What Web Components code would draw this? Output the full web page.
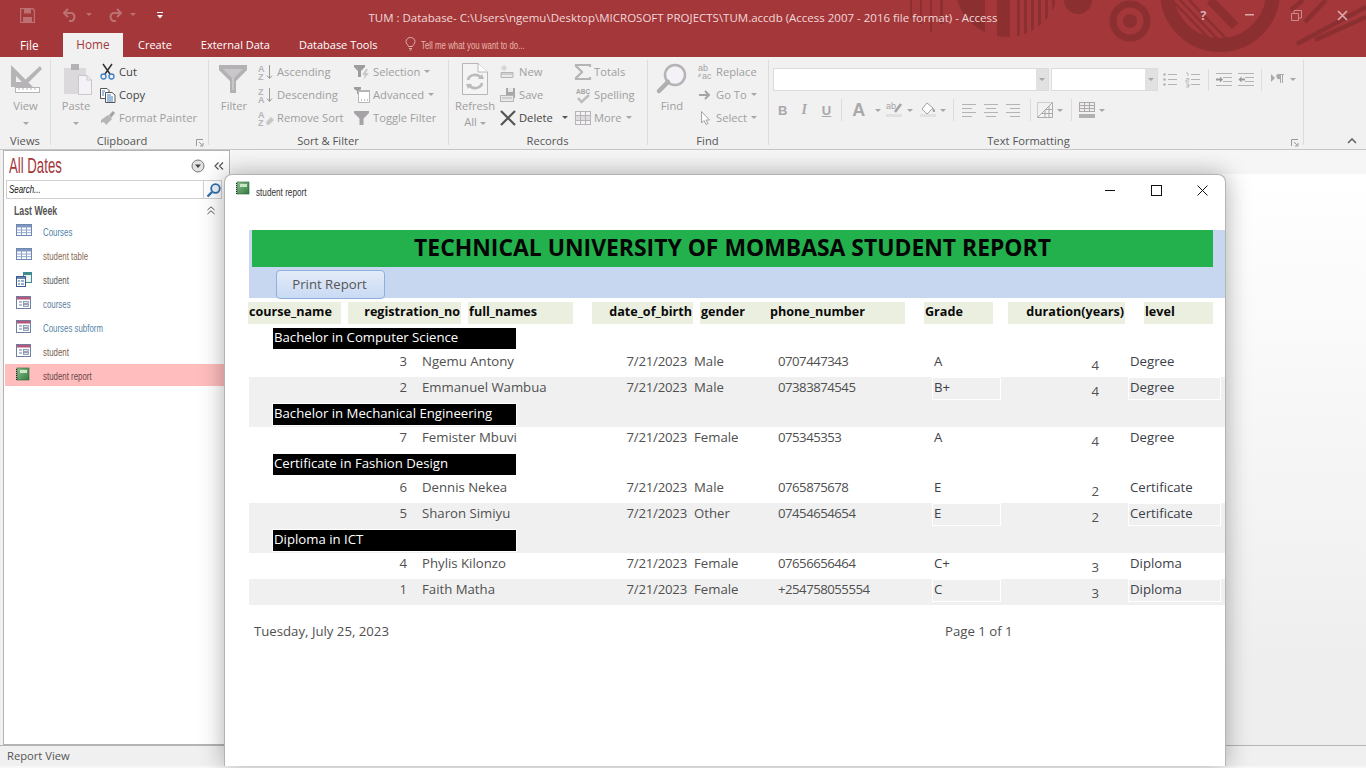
<!DOCTYPE html>
<html>
<head>
<meta charset="utf-8">
<title>TUM student report</title>
<style>
  html, body { margin: 0; padding: 0; }
  body { width: 1366px; height: 768px; overflow: hidden; background: #f8f8f8; font-family: "Open Sans", "Liberation Sans", sans-serif; font-size: 11.2px; color: #444; display: flex; flex-direction: column; position: relative; }
</style>
</head>
<body>
<ac-header>
  <ac-titlebar>TUM : Database- C:\Users\ngemu\Desktop\MICROSOFT PROJECTS\TUM.accdb (Access 2007 - 2016 file format) - Access</ac-titlebar>
  <ac-tabs></ac-tabs>
</ac-header>
<ac-ribbon>
  <ac-group label="Views" width="50">
    <ac-big icon="view" iw="30" ih="30" w="50" menu style="padding-left:1px">View</ac-big>
  </ac-group>
  <ac-group label="Clipboard" width="158" launcher pad="14">
    <ac-big icon="paste" iw="30" ih="32" w="50" menu style="padding-left:2px">Paste</ac-big>
    <ac-stack w="108">
      <ac-small icon="cut" on>Cut</ac-small>
      <ac-small icon="copy" on>Copy</ac-small>
      <ac-small icon="painter">Format Painter</ac-small>
    </ac-stack>
  </ac-group>
  <ac-group label="Sort &amp; Filter" width="240">
    <ac-big icon="filter" iw="30" ih="28" w="50" style="padding-left:2px">Filter</ac-big>
    <ac-stack w="96">
      <ac-small icon="asc">Ascending</ac-small>
      <ac-small icon="desc">Descending</ac-small>
      <ac-small icon="nosort">Remove Sort</ac-small>
    </ac-stack>
    <ac-stack w="94">
      <ac-small icon="selection" menu>Selection</ac-small>
      <ac-small icon="advanced" menu>Advanced</ac-small>
      <ac-small icon="toggle">Toggle Filter</ac-small>
    </ac-stack>
  </ac-group>
  <ac-group label="Records" width="199">
    <ac-big icon="refresh" iw="26" ih="32" w="52" second="All" style="padding-left:2px">Refresh</ac-big>
    <ac-stack w="75">
      <ac-small icon="new">New</ac-small>
      <ac-small icon="save">Save</ac-small>
      <ac-small icon="delete" on menu gap="9">Delete</ac-small>
    </ac-stack>
    <ac-stack w="72">
      <ac-small icon="totals">Totals</ac-small>
      <ac-small icon="spelling">Spelling</ac-small>
      <ac-small icon="more" menu>More</ac-small>
    </ac-stack>
  </ac-group>
  <ac-group label="Find" width="121">
    <ac-big icon="find" iw="30" ih="30" w="50">Find</ac-big>
    <ac-stack w="70">
      <ac-small icon="replace">Replace</ac-small>
      <ac-small icon="goto" menu>Go To</ac-small>
      <ac-small icon="select" menu>Select</ac-small>
    </ac-stack>
  </ac-group>
  <ac-group label="Text Formatting" width="535" launcher pad="14">
    <ac-format></ac-format>
  </ac-group>
  <ac-collapse></ac-collapse>
</ac-ribbon>
<ac-main>
  <ac-nav title-text="All Dates">
    <ac-nav-item icon="table" tone="#4f82a8">Courses</ac-nav-item>
    <ac-nav-item icon="table" tone="#8a6a52">student table</ac-nav-item>
    <ac-nav-item icon="split" tone="#5a5a5a">student</ac-nav-item>
    <ac-nav-item icon="form" tone="#5c7d9c">courses</ac-nav-item>
    <ac-nav-item icon="form" tone="#5585a5">Courses subform</ac-nav-item>
    <ac-nav-item icon="form" tone="#7a5c4c">student</ac-nav-item>
    <ac-nav-item icon="report" tone="#6a4648" selected>student report</ac-nav-item>
  </ac-nav>
</ac-main>
<ac-status>Report View</ac-status>
<ac-window caption="student report">
  <ac-report-header title-text="TECHNICAL UNIVERSITY OF MOMBASA STUDENT REPORT"></ac-report-header>
  <ac-head-row>
    <ac-head-cell x="0" w="93">course_name</ac-head-cell>
    <ac-head-cell x="7" w="113" right>registration_no</ac-head-cell>
    <ac-head-cell x="7" w="105">full_names</ac-head-cell>
    <ac-head-cell x="19" w="101" right>date_of_birth</ac-head-cell>
    <ac-head-cell x="7" w="69">gender</ac-head-cell>
    <ac-head-cell x="0" w="136">phone_number</ac-head-cell>
    <ac-head-cell x="19" w="69">Grade</ac-head-cell>
    <ac-head-cell x="15" w="117" right>duration(years)</ac-head-cell>
    <ac-head-cell x="19" w="69">level</ac-head-cell>
  </ac-head-row>
  <ac-group-head>Bachelor in Computer Science</ac-group-head>
  <ac-row reg="3" name="Ngemu Antony" dob="7/21/2023" gender="Male" phone="0707447343" grade="A" years="4" level="Degree"></ac-row>
  <ac-row alt reg="2" name="Emmanuel Wambua" dob="7/21/2023" gender="Male" phone="07383874545" grade="B+" years="4" level="Degree"></ac-row>
  <ac-group-head alt>Bachelor in Mechanical Engineering</ac-group-head>
  <ac-row reg="7" name="Femister Mbuvi" dob="7/21/2023" gender="Female" phone="075345353" grade="A" years="4" level="Degree"></ac-row>
  <ac-group-head>Certificate in Fashion Design</ac-group-head>
  <ac-row reg="6" name="Dennis Nekea" dob="7/21/2023" gender="Male" phone="0765875678" grade="E" years="2" level="Certificate"></ac-row>
  <ac-row alt reg="5" name="Sharon Simiyu" dob="7/21/2023" gender="Other" phone="07454654654" grade="E" years="2" level="Certificate"></ac-row>
  <ac-group-head alt>Diploma in ICT</ac-group-head>
  <ac-row reg="4" name="Phylis Kilonzo" dob="7/21/2023" gender="Female" phone="07656656464" grade="C+" years="3" level="Diploma"></ac-row>
  <ac-row alt reg="1" name="Faith Matha" dob="7/21/2023" gender="Female" phone="+254758055554" grade="C" years="3" level="Diploma"></ac-row>
  <ac-report-footer date="Tuesday, July 25, 2023" page="Page 1 of 1"></ac-report-footer>
</ac-window>

<script>
const G = "#b6b4b6"
const ICONS = {
  view: `<path d="M0 1V23H22ZM5 12V18H11Z" fill="${G}" fill-rule="evenodd"/><path d="M29 2L15 15L13 20L18 18L31 5Z" fill="${G}"/><rect x="4.500" y="23.500" width="24" height="5" fill="#fff" stroke="${G}"/><path d="M8 24v2M12 24v2M16 24v2M20 24v2M24 24v2" stroke="${G}"/>`,
  paste: `<g transform="translate(3 0)"><rect x="0" y="5" width="22" height="26" fill="#dcd9dc"/><rect x="7" y="1" width="8" height="6" fill="#b5b2b5"/><path d="M14.500 12.500H23L27.500 17V31.500H14.500Z" fill="#f5f2f7" stroke="#c9c6cc"/><path d="M23 12.500V17H27.500" fill="none" stroke="#c9c6cc"/></g>`,
  cut: `<path d="M3 0L10 10M12 0L5 10" stroke="#333" stroke-width="1.500" fill="none"/><circle cx="3.500" cy="12.500" r="2.500" fill="none" stroke="#3f7fc4" stroke-width="1.300"/><circle cx="11.500" cy="12.500" r="2.500" fill="none" stroke="#3f7fc4" stroke-width="1.300"/>`,
  copy: `<path d="M.5 1.500H7L9 3.500V11.500H.5Z" fill="#fff" stroke="#555"/><path d="M5.500 5.500H12L15 8V15.500H5.500Z" fill="#fff" stroke="#555"/><path d="M7 8h4M7 10h6M7 12h6M7 14h6" stroke="#3f7fc4"/><path d="M2 4h3M2 6h2M2 8h2" stroke="#3f7fc4"/>`,
  painter: `<path d="M1 10L8 5L12 9L6 15L4 12L1 13Z" fill="${G}"/><path d="M9 5L13 1L15 3L11 8Z" fill="#a5a3a5"/>`,
  filter: `<path d="M0 0H28V5L17 16V28H11V16L0 5Z" fill="#b3b1b3"/><path d="M4 4H24L15 13V25H13V13Z" fill="#c9c7c9"/>`,
  asc: `<text x="0" y="7.500" font-size="9" font-weight="700" fill="${G}" font-family="Liberation Sans">A</text><text x="0" y="15.500" font-size="9" font-weight="700" fill="${G}" font-family="Liberation Sans">Z</text><path d="M11.500 1V14M9 11.500L11.500 14.500L14 11.500" stroke="#999" fill="none"/>`,
  desc: `<text x="0" y="7.500" font-size="9" font-weight="700" fill="${G}" font-family="Liberation Sans">Z</text><text x="0" y="15.500" font-size="9" font-weight="700" fill="${G}" font-family="Liberation Sans">A</text><path d="M11.500 1V14M9 11.500L11.500 14.500L14 11.500" stroke="#999" fill="none"/>`,
  nosort: `<text x="0" y="7.500" font-size="9" font-weight="700" fill="${G}" font-family="Liberation Sans">A</text><text x="0" y="15.500" font-size="9" font-weight="700" fill="${G}" font-family="Liberation Sans">Z</text><path d="M8 12L13 7L16 10L11 15H9Z" fill="#c9c7c9"/>`,
  selection: `<path d="M0 1H11V3L7 7V13H4V7L0 3Z" fill="#9e9c9e"/><path d="M12 5L8 11H11L9 16L15 9H12L14 5Z" fill="#c9c7c9"/>`,
  advanced: `<path d="M0 0H7V2L5 4V7H3V4L0 2Z" fill="#9e9c9e"/><path d="M4.500 3.500H15.500V15.500H4.500Z" fill="#fff" stroke="${G}"/><path d="M4 3h12v2H4z" fill="${G}"/><path d="M7 13h1M10 13h1M13 13h1" stroke="#888"/>`,
  toggle: `<path d="M0 1H15V3L9.500 8.500V15H5.500V8.500L0 3Z" fill="#a5a3a5"/>`,
  refresh: `<path d="M.5 .5H16L25.500 9V31.500H.5Z" fill="#f5f4f5" stroke="#b8b6b8"/><path d="M16 .5V9H25.500" fill="#fff" stroke="#b8b6b8"/><path d="M6 17A7 6 0 0 1 19 15M20 20A7 6 0 0 1 7 22" stroke="#bbb" stroke-width="2.600" fill="none"/><path d="M16 16L22 16L20 11ZM10 21L4 21L6 26Z" fill="#bbb"/>`,
  new: `<path d="M1 8.500H13V13.500H1Z" fill="#e9e9e9" stroke="${G}"/><path d="M1 10h12" stroke="${G}"/><path d="M4 1V7M1 4H7M2 2L6 6M6 2L2 6" stroke="#d0ced0"/>`,
  save: `<rect x="6" y="1" width="9" height="10" fill="#a9a7a9"/><rect x="8" y="1" width="5" height="4" fill="#e8e8e8"/><rect x="0.500" y="8.500" width="13" height="6" fill="#e8e8e8" stroke="${G}"/><path d="M2 11h10" stroke="${G}"/>`,
  delete: `<path d="M1 1L15 15M15 1L1 15" stroke="#555" stroke-width="2.200"/>`,
  totals: `<path d="M15 3V1H1V2L7 8L1 14V15H15V13" fill="none" stroke="${G}" stroke-width="2.200"/>`,
  spelling: `<text x="1" y="6.500" font-size="6.500" font-weight="700" fill="#a5a3a5" font-family="Liberation Sans">ABC</text><path d="M3 11L6.500 15L14 8" stroke="#bbb" stroke-width="2.400" fill="none"/>`,
  more: `<rect x="0.500" y="1.500" width="15" height="13" fill="#f4f2f4" stroke="${G}"/><rect x="1" y="6" width="14" height="4" fill="#e0dce0"/><path d="M1 5.500H15M1 10.500H15M5.500 2V14M10.500 2V14" stroke="${G}"/>`,
  find: `<circle cx="18" cy="11" r="10" fill="#f5f2f7" stroke="#b5b3b5" stroke-width="2.500"/><path d="M11 18L2 27" stroke="#b0aeb0" stroke-width="4.500" stroke-linecap="round"/>`,
  replace: `<text x="1" y="7" font-size="9" fill="#a5a3a5" font-family="Liberation Sans">ab</text><text x="5" y="15" font-size="9" fill="#a5a3a5" font-family="Liberation Sans">ac</text><path d="M3 9.500V12H1" stroke="#a5a3a5" fill="none"/>`,
  goto: `<path d="M2 8H12M8 4L12 8L8 12" stroke="#a5a3a5" stroke-width="2" fill="none"/>`,
  select: `<path d="M4.500 1.500V13L7 10.500L9 14.500L11 13.500L9 10H12.500Z" fill="#fff" stroke="#a5a3a5"/>`,
  bullets: `<g stroke="#b5b3b5"><path d="M5 2.500h9M5 7.500h9M5 12.500h9"/></g><circle cx="1.500" cy="2.500" r="1.300" fill="#b5b3b5"/><circle cx="1.500" cy="7.500" r="1.300" fill="#b5b3b5"/><circle cx="1.500" cy="12.500" r="1.300" fill="#b5b3b5"/>`,
  numbers: `<path d="M6 2.500h9M6 7.500h9M6 12.500h9" stroke="#b5b3b5"/><path d="M1 1h2v3M1 6.500h3v1.500h-3v2h3M1 12h3v1.500h-2M4 13.500v1.500h-3" stroke="#b5b3b5" fill="none" stroke-width=".8"/>`,
  indent: `<path d="M0 1.500h16M7 5.500h9M7 9.500h9M0 13.500h16" stroke="#b5b3b5"/><path d="M0 7.500h4" stroke="#999" stroke-width="2"/><path d="M4 4.500L7 7.500L4 10.500Z" fill="#999"/>`,
  outdent: `<path d="M0 1.500h16M7 5.500h9M7 9.500h9M0 13.500h16" stroke="#b5b3b5"/><path d="M3 7.500h4" stroke="#999" stroke-width="2"/><path d="M3.500 4.500L.5 7.500L3.500 10.500Z" fill="#999"/>`,
  para: `<path d="M0 2L4 6L0 10Z" fill="#aaa"/><path d="M7 2H13V3H12V11H11V3H10V11H9V7A2.500 2.500 0 0 1 7 2Z" fill="#aaa"/>`,
  high: `<text x="0" y="7" font-size="9" fill="#a5a3a5" font-family="Liberation Sans">ab</text><path d="M9 10L15 2" stroke="#a5a3a5" stroke-width="2.500"/><rect x="0" y="12" width="16" height="3" fill="#e4dfe4"/>`,
  fill: `<path d="M7 1L13 6L7 12L2 7Z" fill="#fff" stroke="#a5a3a5"/><path d="M12 5L15 8V10H13Z" fill="#a5a3a5"/><rect x="0" y="12" width="16" height="3" fill="#e4dfe4"/>`,
  alignl: `<path d="M0 2.500h14M0 6.500h10M0 10.500h14M0 14.500h10" stroke="#b5b3b5"/>`,
  alignc: `<path d="M0 2.500h14M2 6.500h10M0 10.500h14M2 14.500h10" stroke="#b5b3b5"/>`,
  alignr: `<path d="M0 2.500h14M4 6.500h10M0 10.500h14M4 14.500h10" stroke="#b5b3b5"/>`,
  cellfx: `<path d="M.5 15.500V.5H15.500" fill="none" stroke="#aaa" stroke-dasharray="1 1"/><path d="M.5 15.500L15.500 .5V15.500Z" fill="#f5f3f5" stroke="#aaa"/><path d="M8 8V15M12 4V15M5 11.500H15.500M9 7.500H15.500" stroke="#aaa"/>`,
  grid: `<rect x="0.500" y="0.500" width="15" height="9" fill="#f0ecf0" stroke="#aaa"/><path d="M1 3.500H15M1 6.500H15M5.500 1V9M10.500 1V9" stroke="#aaa"/><rect x="0" y="12" width="16" height="4" fill="#b2b0b2"/>`,
  table: `<rect x="0.500" y="0.500" width="15" height="11" fill="#fff" stroke="#6f86b0"/><rect x="1" y="1" width="14" height="2.500" fill="#7d96c0"/><path d="M1 6H15M1 8.700H15M5.500 1V11M10.500 1V11" stroke="#8ea5cb"/>`,
  split: `<rect x="7.500" y="0.500" width="8" height="10" fill="#eaf2f2" stroke="#3e8a8e"/><rect x="8" y="1" width="7" height="2" fill="#3e8a8e"/><rect x="0.500" y="4.500" width="9" height="10" fill="#fff" stroke="#3a5a90"/><rect x="1" y="5" width="8" height="2" fill="#6f86b0"/><path d="M2 9h2M5 9h3M2 12h2M5 12h3" stroke="#3a5a90"/>`,
  form: `<rect x="0.500" y="0.500" width="14" height="12" fill="#fff" stroke="#6f7ea0"/><rect x="1" y="1" width="13" height="2.500" fill="#b8557a"/><path d="M3 6h3M3 9h3" stroke="#6f7ea0"/><rect x="7.500" y="5.500" width="5" height="2" fill="#dfe5f0" stroke="#6f7ea0" stroke-width=".7"/><rect x="7.500" y="8.500" width="5" height="2" fill="#dfe5f0" stroke="#6f7ea0" stroke-width=".7"/>`,
  report: `<defs><linearGradient id="bk" x1="0" y1="0" x2="1" y2="1"><stop offset="0" stop-color="#8fc08f"/><stop offset="1" stop-color="#2f7a3f"/></linearGradient></defs><rect x="1" y="0" width="12" height="12" fill="url(#bk)" stroke="#2d5f38" stroke-width=".6"/><path d="M.5 1V12" stroke="#222" stroke-dasharray="1 1"/><rect x="4" y="2" width="7" height="3" fill="#c8e8c8"/>`,
  search: `<circle cx="9.500" cy="5.500" r="4.300" fill="#eef5fb" stroke="#2f6fae" stroke-width="1.800"/><path d="M6 9L1.500 13.500" stroke="#2f6fae" stroke-width="2.400"/>`
}

class AcIcon extends HTMLElement {
  connectedCallback() {
    const w = this.getAttribute("w") || 16
    const h = this.getAttribute("h") || 16
    const shadow = this.attachShadow({ mode: "open" })
    shadow.innerHTML = `<style>:host{display:block;width:${w}px;height:${h}px}svg{display:block;overflow:visible}</style>
      <svg width="${w}" height="${h}" viewBox="0 0 ${w} ${h}">${ICONS[this.getAttribute("name")] || ""}</svg>`
  }
}

class AcArrow extends HTMLElement {
  constructor() {
    super()
    this.attachShadow({ mode: "open" }).innerHTML = `<style>
      :host { display: inline-block; width: 0; height: 0; border: 3px solid transparent; border-top: 3px solid #a8a6a8; border-bottom: 0; vertical-align: middle; }
    </style>`
  }
}

// red band behind the title and the tabs, the pattern runs under both
class AcHeader extends HTMLElement {
  constructor() {
    super()
    this.attachShadow({ mode: "open" }).innerHTML = `<style>
      :host { display: block; height: 57px; background: #a4373a; flex: none; position: relative; overflow: hidden; }
      svg { position: absolute; left: 900px; top: 0; }
      .fg { position: relative; }
    </style>
    <svg width="466" height="57" viewBox="0 0 466 57">
      <defs>
        <clipPath id="half"><circle cx="107" cy="-15" r="52"/></clipPath>
        <clipPath id="ring"><circle cx="320" cy="-8" r="58"/></clipPath>
      </defs>
      <g fill="#8c2f31">
        <g clip-path="url(#half)">
          <rect x="55" y="0" width="30" height="40"/><rect x="97" y="0" width="13" height="40"/><rect x="117" y="0" width="3" height="40"/><rect x="124" y="0" width="3" height="40"/><rect x="131" y="0" width="3" height="40"/><rect x="138" y="0" width="3" height="40"/><rect x="145" y="0" width="3" height="40"/><rect x="152" y="0" width="3" height="40"/>
        </g>
        <path d="M10 0h2v18h-2zM20 0h2v24h-2zM30 0h2v32h-2zM40 0h3v24h-3z"/>
        <circle cx="178" cy="0" r="14"/>
        <circle cx="230" cy="21" r="7"/>
      </g>
      <circle cx="230" cy="21" r="17" fill="none" stroke="#8c2f31" stroke-width="7"/>
      <circle cx="320" cy="-8" r="53" fill="none" stroke="#8c2f31" stroke-width="14"/>
      <g clip-path="url(#ring)" stroke="#8c2f31" stroke-width="2.500">
        <path d="M272 0L322 52M280 0L330 52M289 0L339 52"/>
        <path d="M310 0L335 26" stroke-width="9"/>
      </g>
      <g stroke="#8c2f31" stroke-width="4.500">
        <path d="M403 0L391 10M426 0L405 22M466 7L397 44M466 17L415 40"/>
      </g>
    </svg>
    <div class="fg"><slot></slot></div>`
  }
}

class AcTitlebar extends HTMLElement {
  constructor() {
    super()
    this.attachShadow({ mode: "open" }).innerHTML = `<style>
      :host { display: flex; align-items: center; justify-content: center; height: 33px; color: #f0d9d9; font-size: 11.500px; position: relative; }
      .qat { position: absolute; left: 0; top: 0; height: 30px; }
      .qat > * { position: absolute; }
      .ctl { position: absolute; right: 0; top: 0; display: flex; width: 186px; height: 30px; }
      .ctl span { flex: 1; display: flex; align-items: center; justify-content: center; color: #d7aaab; font-weight: 700; font-size: 13px; }
      .title { padding-top: 1px; }
    </style>
    <div class="qat">
      <svg style="left:20px;top:8px" width="15" height="15" viewBox="0 0 15 15"><path d="M.5 .5H12.500L14.500 2.500V14.500H.5Z" fill="none" stroke="#bd7071" stroke-width="1.500"/><rect x="4" y="1" width="7" height="4.500" fill="#bd7071"/><rect x="3" y="9" width="9" height="5" fill="#bd7071"/></svg>
      <svg style="left:63px;top:8px" width="15" height="14" viewBox="0 0 15 14"><path d="M5 1L1 5L5 9M1 5H9A4.500 4.500 0 0 1 9 13H6" fill="none" stroke="#bd7071" stroke-width="2"/></svg>
      <svg style="left:86px;top:13px" width="6" height="3" viewBox="0 0 6 3"><path d="M0 0H6L3 3Z" fill="#bd7071"/></svg>
      <svg style="left:107px;top:8px" width="15" height="14" viewBox="0 0 15 14"><path d="M10 1L14 5L10 9M14 5H6A4.500 4.500 0 0 0 6 13H9" fill="none" stroke="#bd7071" stroke-width="2"/></svg>
      <svg style="left:130px;top:13px" width="6" height="3" viewBox="0 0 6 3"><path d="M0 0H6L3 3Z" fill="#bd7071"/></svg>
      <svg style="left:157px;top:12px" width="6" height="7" viewBox="0 0 6 7"><path d="M0 .5H6" stroke="#fff"/><path d="M0 3H6L3 6.500Z" fill="#fff"/></svg>
    </div>
    <span class="title"><slot></slot></span>
    <div class="ctl"><span>?</span>
      <span><svg width="10" height="2"><rect width="9" height="1.500" fill="#d7aaab"/></svg></span>
      <span><svg width="11" height="11" viewBox="0 0 11 11"><path d="M.5 3.500H7.500V10.500H.5ZM3 3V.5H10.500V8H8" fill="none" stroke="#c98d8e"/></svg></span>
      <span><svg width="11" height="11" viewBox="0 0 11 11"><path d="M1 1L10 10M10 1L1 10" stroke="#d7aaab" stroke-width="1.700"/></svg></span>
    </div>`
  }
}

class AcTabs extends HTMLElement {
  constructor() {
    super()
    this.attachShadow({ mode: "open" }).innerHTML = `<style>
      :host { display: flex; height: 24px; color: #fff; font-size: 11px; align-items: stretch; line-height: 23px; position: relative; }
      span { display: block; white-space: nowrap; }
      .file { margin-left: 20px; line-height: 25px; width: 43px; font-size: 11.800px; }
      .home { width: 60px; background: #f1f1f1; color: #a4373a; text-align: center; font-size: 11.800px; }
      .tab { margin-left: 29px; }
      .tell { display: flex; align-items: center; margin-left: 28px; color: #e8b8ac; font-size: 10.500px; padding-top: 1px; }
      .tell b { font-weight: 400; font-family: "Liberation Sans", sans-serif; display: block; transform: scaleX(.75); transform-origin: left center; }
      svg { margin-right: 5px; margin-top: -3px; flex: none; }
    </style>
    <span class="file">File</span>
    <span class="home">Home</span>
    <span class="tab" style="margin-left:15px">Create</span>
    <span class="tab">External Data</span>
    <span class="tab">Database Tools</span>
    <span class="tell"><svg width="11" height="14" viewBox="0 0 11 14"><path d="M3.500 9.500C3 7.500 1 7 1 4.500A4.500 4 0 0 1 10 4.500C10 7 8 7.500 7.500 9.500ZM4 11.500H7M4.500 13H6.500" fill="none" stroke="#ddb0b0"/></svg><b>Tell me what you want to do...</b></span>`
  }
}

class AcRibbon extends HTMLElement {
  constructor() {
    super()
    this.attachShadow({ mode: "open" }).innerHTML = `<style>
      :host { display: flex; height: 93px; box-sizing: border-box; background: #f1f1f1; border-bottom: 1px solid #c6c6c6; flex: none; position: relative; padding-bottom: 1px; }
    </style><slot></slot>`
  }
}

class AcGroup extends HTMLElement {
  connectedCallback() {
    const launcher = this.hasAttribute("launcher")
    const pad = this.getAttribute("pad") || 0
    this.attachShadow({ mode: "open" }).innerHTML = `<style>
      :host { display: flex; flex-direction: column; flex: none; width: ${this.getAttribute("width")}px; box-sizing: border-box; margin-top: 3px; height: 85px; position: relative; }
      :host::after { content: ""; position: absolute; right: -1px; top: 0; bottom: 0; width: 1px; background: #dcdcdc; }
      .body { display: flex; height: 73px; }
      .label { height: 12px; line-height: 16px; text-align: center; color: #555; white-space: nowrap; padding-right: ${pad}px; }
      svg { position: absolute; right: 4px; bottom: -2px; }
    </style>
    <div class="body"><slot></slot></div>
    <div class="label">${this.getAttribute("label").replace("&", "&amp;")}</div>
    ${launcher ? `<svg width="8" height="8" viewBox="0 0 8 8"><path d="M.5 7V.5H7M3 3L6 6M7 4V7H4" fill="none" stroke="#999"/></svg>` : ""}`
  }
}

class AcStack extends HTMLElement {
  connectedCallback() {
    this.attachShadow({ mode: "open" }).innerHTML = `<style>
      :host { display: flex; flex-direction: column; width: ${this.getAttribute("w")}px; flex: none; }
    </style><slot></slot>`
  }
}

class AcBig extends HTMLElement {
  connectedCallback() {
    const second = this.getAttribute("second")
    const menu = this.hasAttribute("menu")
    this.attachShadow({ mode: "open" }).innerHTML = `<style>
      :host { display: flex; flex-direction: column; align-items: center; box-sizing: border-box; width: ${this.getAttribute("w")}px; flex: none; color: #a09ea0; }
      .icon { height: 38px; display: flex; align-items: center; }
      .line { height: 16px; line-height: 16px; white-space: nowrap; }
    </style>
    <div class="icon"><ac-icon name="${this.getAttribute("icon")}" w="${this.getAttribute("iw")}" h="${this.getAttribute("ih")}"></ac-icon></div>
    <div class="line"><slot></slot></div>
    <div class="line">${second ? second + " <ac-arrow></ac-arrow>" : menu ? "<ac-arrow></ac-arrow>" : ""}</div>`
  }
}

class AcSmall extends HTMLElement {
  connectedCallback() {
    const on = this.hasAttribute("on")
    const gap = this.getAttribute("gap") || 4
    this.attachShadow({ mode: "open" }).innerHTML = `<style>
      :host { display: flex; align-items: center; height: 23px; color: ${on ? "#444" : "#a09ea0"}; white-space: nowrap; }
      .icon { width: 19px; flex: none; }
      ac-arrow { margin-left: ${gap}px; ${on ? "border-top-color: #555;" : ""} }
    </style>
    <div class="icon"><ac-icon name="${this.getAttribute("icon")}"></ac-icon></div>
    <slot></slot>${this.hasAttribute("menu") ? "<ac-arrow></ac-arrow>" : ""}`
  }
}

class AcFormat extends HTMLElement {
  _items(list) {
    return list.map(it => {
      const [kind, x, a] = it
      if (kind === "sep") return `<i class="sep" style="margin-left:${x}px"></i>`
      if (kind === "arrow") return `<ac-arrow style="margin-left:${x}px"></ac-arrow>`
      if (kind === "txt") return `<b class="txt ${a}" style="margin-left:${x}px">${it[3]}</b>`
      return `<ac-icon name="${kind}" w="${a}" style="margin-left:${x}px"></ac-icon>`
    }).join("")
  }
  connectedCallback() {
    const row1 = [["bullets", 5, 14], ["numbers", 8, 15], ["sep", 8], ["indent", 7, 16], ["outdent", 6, 16], ["sep", 7], ["para", 9, 13], ["arrow", 6]]
    const row2 = [["txt", 5, "b", "B"], ["txt", 14, "i", "I"], ["txt", 15, "u", "U"], ["sep", 10], ["txt", 10, "a", "A"], ["arrow", 10], ["high", 5, 16], ["arrow", 5], ["fill", 7, 16], ["arrow", 4], ["sep", 7], ["alignl", 8, 14], ["alignc", 8, 14], ["alignr", 8, 14], ["sep", 10], ["cellfx", 6, 16], ["arrow", 4], ["sep", 8], ["grid", 7, 16], ["arrow", 4]]
    this.attachShadow({ mode: "open" }).innerHTML = `<style>
      :host { display: flex; flex-direction: column; padding-left: 5px; }
      .row { display: flex; align-items: center; height: 23px; }
      .row1 { margin-top: 8px; }
      .row2 { margin-top: 7px; height: 24px; }
      .combo { display: flex; justify-content: flex-end; height: 23px; box-sizing: border-box; background: #fff; border: 1px solid #dcdcdc; }
      .combo span { width: 12px; background: #e1e1e1; display: flex; align-items: center; justify-content: center; }
      .sep { display: block; width: 1px; height: 22px; background: #dcdcdc; }
      .txt { color: #aaa8aa; font-size: 13px; font-family: "Liberation Sans", sans-serif; line-height: 1; display: block; }
      .i { font-style: italic; font-family: "Liberation Serif", serif; font-size: 14px; }
      .u { text-decoration: underline; }
      .a { font-size: 18px; }
    </style>
    <div class="row row1">
      <div class="combo" style="width:276px;margin-right:2px"><span><ac-arrow></ac-arrow></span></div>
      <div class="combo" style="width:107px"><span><ac-arrow></ac-arrow></span></div>
      ${this._items(row1)}
    </div>
    <div class="row row2">${this._items(row2)}</div>`
  }
}

class AcCollapse extends HTMLElement {
  constructor() {
    super()
    this.attachShadow({ mode: "open" }).innerHTML = `<style>
      :host { position: absolute; left: 1347px; top: 81px; display: block; }
      svg { display: block; }
    </style><svg width="10" height="6" viewBox="0 0 10 6"><path d="M1 5L5 1L9 5" fill="none" stroke="#666" stroke-width="1.600"/></svg>`
  }
}

class AcMain extends HTMLElement {
  constructor() {
    super()
    this.attachShadow({ mode: "open" }).innerHTML = `<style>
      :host { display: flex; flex: 1; min-height: 0; background: linear-gradient(#f6f6f6 0, #f6f6f6 24px, #ffffff 24px, #eeeeee 520px); border-left: 3px solid #f1f1f1; }
    </style><slot></slot>`
  }
}

class AcNav extends HTMLElement {
  connectedCallback() {
    this.attachShadow({ mode: "open" }).innerHTML = `<style>
      :host { display: flex; flex-direction: column; width: 227px; box-sizing: border-box; background: #fff; border: 1px solid #b4b4b4; font-family: "Liberation Sans", sans-serif; }
      .top { display: flex; align-items: center; height: 29px; padding-left: 5px; }
      .title { color: #a4373a; font-size: 22px; flex: 1; line-height: 29px; white-space: nowrap; transform: scaleX(.6); transform-origin: left center; }
      .top svg { margin-right: 9px; }
      .search { display: flex; height: 19px; margin-left: 2px; width: 216px; box-sizing: border-box; border: 1px solid #d0d0d0; }
      .search div { flex: 1; padding-left: 2px; }
      .search em { display: block; color: #111; font-size: 11px; line-height: 17px; transform: scaleX(.72); transform-origin: left center; }
      .search span { width: 17px; border-left: 1px solid #d0d0d0; display: flex; align-items: center; justify-content: center; }
      .head { display: flex; align-items: center; justify-content: space-between; height: 21px; box-sizing: border-box; padding: 2px 14px 0 10px; color: #555; font-weight: 700; font-size: 12px; }
      .head b { display: block; transform: scaleX(.73); transform-origin: left center; }
      .list { display: flex; flex-direction: column; }
    </style>
    <div class="top"><span class="title">${this.getAttribute("title-text")}</span>
      <svg width="14" height="14" viewBox="0 0 14 14"><circle cx="7" cy="7" r="6" fill="#e2e2e2" stroke="#777"/><path d="M4 5.500H10L7 9Z" fill="#444"/></svg>
      <svg width="10" height="8" viewBox="0 0 10 8" style="margin-right:5px"><path d="M4.500 .5L1 4L4.500 7.500M9 .5L5.500 4L9 7.500" fill="none" stroke="#555" stroke-width="1.200"/></svg>
    </div>
    <div class="search"><div><em>Search...</em></div><span><ac-icon name="search" w="14" h="14"></ac-icon></span></div>
    <div class="head"><b>Last Week</b><svg width="8" height="9" viewBox="0 0 8 9"><path d="M.5 4L4 .8L7.500 4M.5 8L4 4.800L7.500 8" fill="none" stroke="#555"/></svg></div>
    <div class="list"><slot></slot></div>`
  }
}

class AcNavItem extends HTMLElement {
  connectedCallback() {
    const sel = this.hasAttribute("selected")
    this.attachShadow({ mode: "open" }).innerHTML = `<style>
      :host { display: flex; align-items: center; height: 24px; box-sizing: border-box; margin-left: 1px; padding-left: 11px; font-size: 10.500px; color: ${this.getAttribute("tone")}; white-space: nowrap; ${sel ? "background: linear-gradient(#ffbdbd,#ffbdbd) 0 0/100% 22px no-repeat;" : ""} }
      .icon { width: 27px; flex: none; }
      .text { display: block; transform: scaleX(.75); transform-origin: left center; }
    </style>
    <div class="icon"><ac-icon name="${this.getAttribute("icon")}"></ac-icon></div><span class="text"><slot></slot></span>`
  }
}

class AcStatus extends HTMLElement {
  constructor() {
    super()
    this.attachShadow({ mode: "open" }).innerHTML = `<style>
      :host { display: flex; align-items: center; height: 21px; padding: 0 0 2px 7px; box-sizing: border-box; background: #f0f0f0; border-top: 1px solid #b4b4b4; color: #555; flex: none; margin-bottom: 2px; }
    </style><slot></slot>`
  }
}

class AcWindow extends HTMLElement {
  connectedCallback() {
    this.attachShadow({ mode: "open" }).innerHTML = `<style>
      :host { position: absolute; left: 224px; top: 174px; width: 1002px; height: 592px; box-sizing: border-box; background: #fff; border: 1px solid #b4b4b4; border-bottom: 0; border-radius: 8px 8px 0 0; box-shadow: 0 0 24px rgba(0,0,0,.32); display: flex; flex-direction: column; font-size: 13.200px; color: #505050; overflow: hidden; }
      .caption { display: flex; align-items: center; height: 30px; flex: none; padding-left: 11px; font-size: 10.500px; color: #333; margin-bottom: 25px; }
      .caption ac-icon { margin-right: 6px; margin-top: -3px; flex: none; }
      .name { display: block; font-family: "Liberation Sans", sans-serif; transform: scaleX(.78) translateY(2px); transform-origin: left center; }
      .controls { margin-left: auto; display: flex; }
      .controls span { width: 46px; display: flex; justify-content: center; align-items: center; }
      .report { margin-left: 24px; display: flex; flex-direction: column; }
    </style>
    <div class="caption"><ac-icon name="report" w="14" h="13"></ac-icon><span class="name">${this.getAttribute("caption")}</span>
      <div class="controls">
        <span style="padding-left:1px"><svg width="10" height="1"><rect width="10" height="1" fill="#111"/></svg></span>
        <span><svg width="11" height="11" viewBox="0 0 11 11"><rect x=".5" y=".5" width="10" height="10" fill="none" stroke="#111"/></svg></span>
        <span><svg width="11" height="11" viewBox="0 0 11 11"><path d="M.5 .5L10.500 10.500M10.500 .5L.5 10.500" stroke="#111"/></svg></span>
      </div>
    </div>
    <div class="report"><slot></slot></div>`
  }
}

class AcReportHeader extends HTMLElement {
  connectedCallback() {
    this.attachShadow({ mode: "open" }).innerHTML = `<style>
      :host { display: block; height: 68px; background: #c6d7ef; position: relative; }
      h1 { margin: 0 12px 0 3px; height: 37px; background: #23b14d; color: #050505; font-size: 22.900px; font-weight: 700; line-height: 36px; text-align: center; }
      button { display: block; box-sizing: border-box; margin: 3px 0 0 27px; width: 109px; height: 29px; border: 1px solid #8fb0dc; border-radius: 4px; background: linear-gradient(#e3ebf8, #c8daf3); color: #555; font: inherit; font-size: 13.200px; padding: 0 2px 2px 0; }
    </style>
    <h1>${this.getAttribute("title-text")}</h1>
    <button>Print Report</button>`
  }
}

class AcHeadRow extends HTMLElement {
  constructor() {
    super()
    this.attachShadow({ mode: "open" }).innerHTML = `<style>
      :host { display: flex; height: 22px; margin: 4px 0 3px -1px; }
    </style><slot></slot>`
  }
}

class AcHeadCell extends HTMLElement {
  connectedCallback() {
    const right = this.hasAttribute("right")
    this.attachShadow({ mode: "open" }).innerHTML = `<style>
      :host { display: block; flex: none; box-sizing: border-box; width: ${this.getAttribute("w")}px; margin-left: ${this.getAttribute("x")}px; height: 22px; line-height: 19px; background: #ebefe0; color: #0a0a0a; font-weight: 700; font-size: 12.600px; white-space: nowrap; padding: 0 1px; text-align: ${right ? "right" : "left"}; }
    </style><slot></slot>`
  }
}

class AcGroupHead extends HTMLElement {
  connectedCallback() {
    this.attachShadow({ mode: "open" }).innerHTML = `<style>
      :host { display: block; height: 24px; box-sizing: border-box; padding: 1px 0 0 24px; background: ${this.hasAttribute("alt") ? "#f0f0f0" : "#fff"}; }
      div { width: 243px; height: 21px; box-sizing: border-box; background: #000; color: #fff; line-height: 19px; padding-left: 1px; box-shadow: 0 0 0 1px #fff; white-space: nowrap; }
    </style><div><slot></slot></div>`
  }
}

class AcRow extends HTMLElement {
  connectedCallback() {
    const a = n => this.getAttribute(n)
    this.attachShadow({ mode: "open" }).innerHTML = `<style>
      :host { display: grid; grid-template-columns: 158px 175px 105px 91px 154px 69px 98px 122px; height: 26px; line-height: 20px; background: ${this.hasAttribute("alt") ? "#f0f0f0" : "#fff"}; white-space: nowrap; }
      .r { text-align: right; }
      .name { padding-left: 15px; }
      .dob { letter-spacing: -.22px; }
      .gender { padding-left: 7px; }
      .box { height: 23px; box-sizing: border-box; border: 1px solid ${this.hasAttribute("alt") ? "#fff" : "transparent"}; padding-left: 1px; color: #3c4048; line-height: 18px; }
      .years { padding-top: 4px; }
      .level { margin-left: 29px; width: 93px; }
      .phone { width: 154px; letter-spacing: -.5px; }
    </style>
    <span class="r">${a("reg")}</span>
    <span class="name">${a("name")}</span>
    <span class="r dob">${a("dob")}</span>
    <span class="gender">${a("gender")}</span>
    <span class="phone">${a("phone")}</span>
    <span class="box grade">${a("grade")}</span>
    <span class="r years">${a("years")}</span>
    <span class="box level">${a("level")}</span>`
  }
}

class AcReportFooter extends HTMLElement {
  connectedCallback() {
    this.attachShadow({ mode: "open" }).innerHTML = `<style>
      :host { display: flex; margin-top: 16px; line-height: 20px; padding-left: 5px; white-space: nowrap; }
      .date { width: 691px; }
    </style><span class="date">${this.getAttribute("date")}</span><span>${this.getAttribute("page")}</span>`
  }
}

const elements = {
  "ac-icon": AcIcon, "ac-arrow": AcArrow, "ac-header": AcHeader, "ac-titlebar": AcTitlebar, "ac-tabs": AcTabs,
  "ac-ribbon": AcRibbon, "ac-group": AcGroup, "ac-stack": AcStack, "ac-big": AcBig,
  "ac-small": AcSmall, "ac-format": AcFormat, "ac-collapse": AcCollapse, "ac-main": AcMain,
  "ac-nav": AcNav, "ac-nav-item": AcNavItem, "ac-status": AcStatus, "ac-window": AcWindow,
  "ac-report-header": AcReportHeader, "ac-head-row": AcHeadRow, "ac-head-cell": AcHeadCell,
  "ac-group-head": AcGroupHead, "ac-row": AcRow, "ac-report-footer": AcReportFooter
}
for (const name in elements) window.customElements.define(name, elements[name])
</script>
</body>
</html>
